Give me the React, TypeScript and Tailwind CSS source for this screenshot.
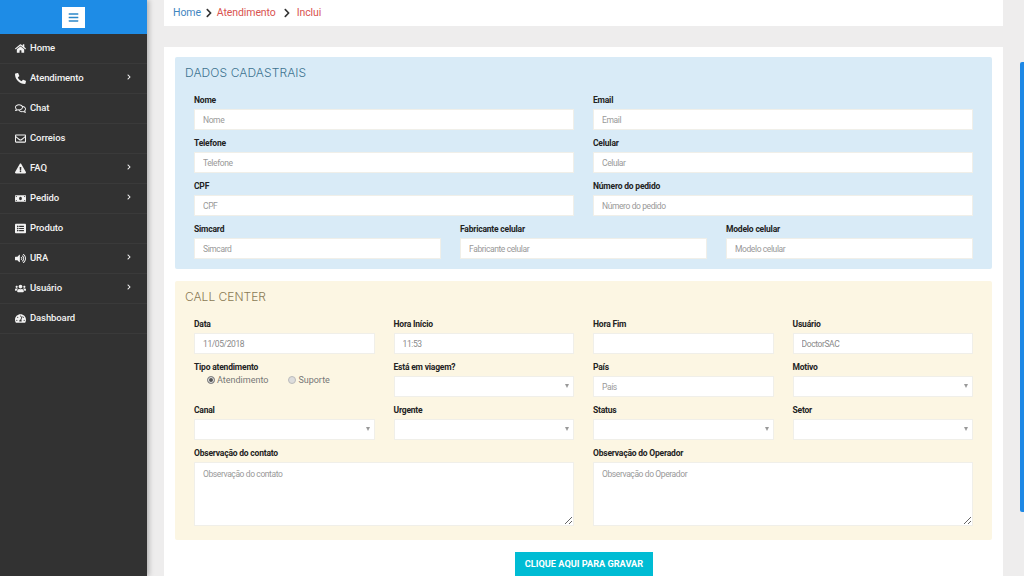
import React from 'react';
import {
    FaBars,
    FaHome,
    FaPhone,
    FaRegComments,
    FaRegEnvelope,
    FaExclamationTriangle,
    FaMoneyBill,
    FaListAlt,
    FaVolumeUp,
    FaUsers,
    FaTachometerAlt,
    FaChevronRight,
} from 'react-icons/fa';

const MENU = [
    { label: 'Home', icon: FaHome, sub: false, flip: false },
    { label: 'Atendimento', icon: FaPhone, sub: true, flip: true },
    { label: 'Chat', icon: FaRegComments, sub: false, flip: false },
    { label: 'Correios', icon: FaRegEnvelope, sub: false, flip: false },
    { label: 'FAQ', icon: FaExclamationTriangle, sub: true, flip: false },
    { label: 'Pedido', icon: FaMoneyBill, sub: true, flip: false },
    { label: 'Produto', icon: FaListAlt, sub: false, flip: false },
    { label: 'URA', icon: FaVolumeUp, sub: true, flip: false },
    { label: 'Usuário', icon: FaUsers, sub: true, flip: false },
    { label: 'Dashboard', icon: FaTachometerAlt, sub: false, flip: false },
];

const inputClass =
    'block w-full h-[21px] bg-white border border-[#f0efe9] px-2 text-[8.5px] tracking-[-0.4px] text-[#8a8a8a] placeholder:text-[#999] outline-none';

const Label: React.FC<{ text: string }> = ({ text }) => (
    <label className="block h-[16px] text-[8.5px] font-bold leading-[14px] tracking-[-0.2px] text-[#222]">{text}</label>
);

const Field: React.FC<{ label: string; value?: string; empty?: boolean }> = ({ label, value, empty }) => (
    <div className="h-[43px]">
        <Label text={label} />
        <input
            className={inputClass}
            placeholder={empty || value ? undefined : label}
            defaultValue={value}
        />
    </div>
);

const SelectField: React.FC<{ label: string }> = ({ label }) => (
    <div className="h-[43px]">
        <Label text={label} />
        <div className="relative">
            <select className={`${inputClass} appearance-none`} />
            <span className="absolute right-[5px] top-[8px] h-0 w-0 border-x-[2.5px] border-t-[4px] border-x-transparent border-t-[#999]" />
        </div>
    </div>
);

const TextField: React.FC<{ label: string }> = ({ label }) => (
    <div>
        <Label text={label} />
        <textarea className={`${inputClass} h-[64px] py-[5px]`} placeholder={label} />
    </div>
);

const Radio: React.FC<{ label: string; checked?: boolean }> = ({ label, checked }) => (
    <label className="flex items-center gap-[2px] text-[9px] leading-[12px] text-[#777]">
        <input
            type="radio"
            name="tipo"
            defaultChecked={checked}
            className="m-0 h-[8px] w-[8px] appearance-none rounded-full border border-[#bbb] bg-[#ddd] checked:border-[#888] checked:bg-[#555] checked:shadow-[inset_0_0_0_1px_#eee]"
        />
        {label}
    </label>
);

export default function App() {
    return (
        <div className="relative flex h-[576px] w-[1024px] overflow-hidden bg-[#eeeded] font-['Roboto',sans-serif]">
            <aside className="w-[147px] shrink-0 bg-[#323232] shadow-[2px_0_5px_rgba(0,0,0,0.25)]">
                <div className="flex h-[34px] items-center justify-center bg-[#1e8ce6]">
                    <div className="flex h-[21px] w-[23px] items-center justify-center bg-white text-[#2c88c9]">
                        <FaBars size={11} />
                    </div>
                </div>
                <nav>
                    {MENU.map((item) => (
                        <div
                            key={item.label}
                            className="flex h-[30px] items-center border-b border-[#3a3a3a] pl-[15px] pr-[15px] text-[9.5px] font-medium tracking-[-0.1px] text-[#f2f2f2]"
                        >
                            <span className="flex w-[15px] shrink-0 items-center">
                                <item.icon size={11} className={item.flip ? '-scale-x-100' : undefined} />
                            </span>
                            <span className="flex-1">{item.label}</span>
                            {item.sub && <FaChevronRight size={6} className="mb-[3px]" />}
                        </div>
                    ))}
                </nav>
            </aside>

            <main className="w-[856px] pl-[17px]">
                <div className="flex h-[26px] w-[839px] items-start bg-white pl-[9px] pt-[6px] text-[10.5px] leading-[14px] tracking-[-0.1px]">
                    <span className="text-[#3f86bf]">Home</span>
                    <FaChevronRight size={10} className="ml-[3px] mr-[3px] mt-[2px] text-[#333]" />
                    <span className="text-[#d9534f]">Atendimento</span>
                    <FaChevronRight size={10} className="ml-[6px] mr-[5px] mt-[2px] text-[#333]" />
                    <span className="text-[#d9534f]">Inclui</span>
                </div>

                <div className="mt-[21px] h-[560px] w-[839px] bg-white px-[11px] pt-[10px]">
                    <section className="h-[212px] rounded-[2px] bg-[#d9ebf7] px-[19px]">
                        <h2 className="-ml-[9px] h-[36px] pt-[7px] font-['Inter',sans-serif] text-[12px] font-light leading-[18px] tracking-[0.1px] text-[#3d7390]">
                            DADOS CADASTRAIS
                        </h2>
                        <div className="grid grid-cols-2 gap-x-[19px]">
                            <Field label="Nome" />
                            <Field label="Email" />
                            <Field label="Telefone" />
                            <Field label="Celular" />
                            <Field label="CPF" />
                            <Field label="Número do pedido" />
                        </div>
                        <div className="grid grid-cols-3 gap-x-[19px]">
                            <Field label="Simcard" />
                            <Field label="Fabricante celular" />
                            <Field label="Modelo celular" />
                        </div>
                    </section>

                    <section className="mt-[12px] h-[259px] rounded-[2px] bg-[#fcf6e3] px-[19px]">
                        <h2 className="-ml-[9px] h-[36px] pt-[7px] font-['Inter',sans-serif] text-[12px] font-light leading-[18px] text-[#8a7a55]">
                            CALL CENTER
                        </h2>
                        <div className="grid grid-cols-4 gap-x-[19px]">
                            <Field label="Data" value="11/05/2018" />
                            <Field label="Hora Início" value="11:53" />
                            <Field label="Hora Fim" empty />
                            <Field label="Usuário" value="DoctorSAC" />
                            <div className="h-[43px]">
                                <Label text="Tipo atendimento" />
                                <div className="-mt-[2px] flex gap-[20px] pl-[13px]">
                                    <Radio label="Atendimento" checked />
                                    <Radio label="Suporte" />
                                </div>
                            </div>
                            <SelectField label="Está em viagem?" />
                            <Field label="País" />
                            <SelectField label="Motivo" />
                            <SelectField label="Canal" />
                            <SelectField label="Urgente" />
                            <SelectField label="Status" />
                            <SelectField label="Setor" />
                        </div>
                        <div className="grid grid-cols-2 gap-x-[19px]">
                            <TextField label="Observação do contato" />
                            <TextField label="Observação do Operador" />
                        </div>
                    </section>

                    <div className="mt-[12px] flex justify-center">
                        <button className="ml-[1px] h-[24px] w-[138px] bg-[#00bcd4] text-[9.2px] font-bold text-white">
                            CLIQUE AQUI PARA GRAVAR
                        </button>
                    </div>
                </div>
            </main>

            <div className="absolute right-0 top-[62px] h-[450px] w-[4px] rounded-l-[2px] bg-[#1e88e5]" />
        </div>
    );
}
